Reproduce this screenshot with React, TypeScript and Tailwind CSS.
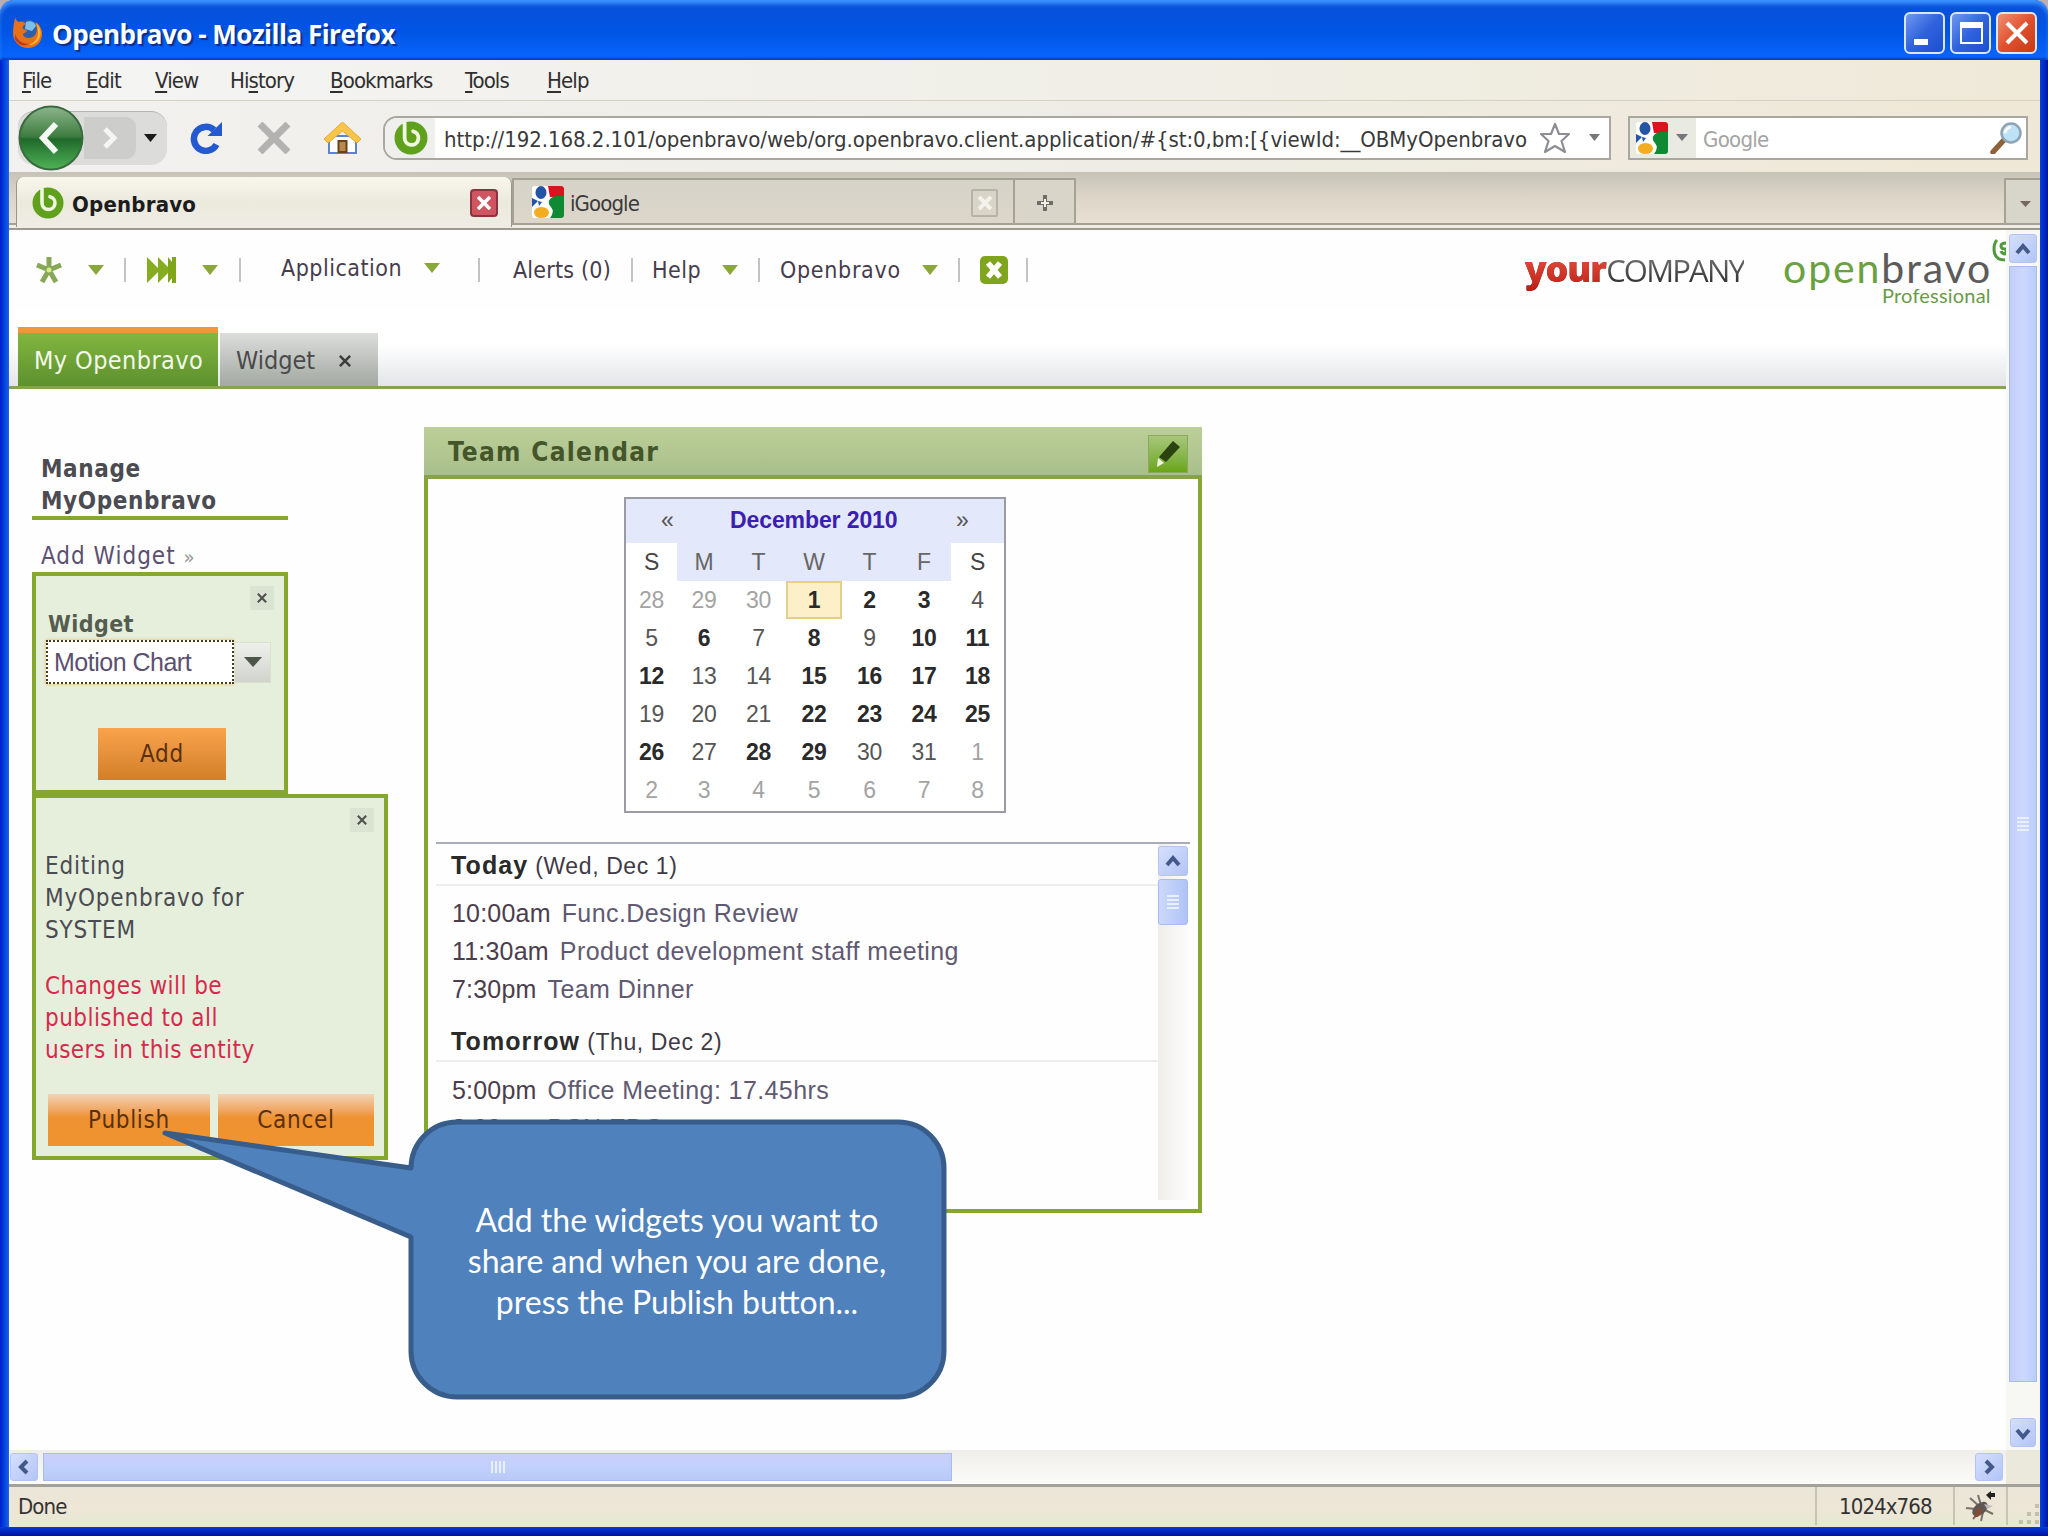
import type { ReactNode } from 'react'

const MENU = [
  { pre: '', key: 'F', post: 'ile', box: 'w-[64px]' },
  { pre: '', key: 'E', post: 'dit', box: 'w-[69px]' },
  { pre: '', key: 'V', post: 'iew', box: 'w-[75px]' },
  { pre: 'Hi', key: 's', post: 'tory', box: 'w-[100px]' },
  { pre: '', key: 'B', post: 'ookmarks', box: 'w-[135px]' },
  { pre: '', key: 'T', post: 'ools', box: 'w-[82px]' },
  { pre: '', key: 'H', post: 'elp', box: 'w-[60px]' },
]

type Tone = 'out' | 'plain' | 'busy' | 'today'

interface Day {
  n: number
  tone: Tone
}

const d = (n: number, tone: Tone = 'plain'): Day => ({ n, tone })

const WEEKS: Day[][] = [
  [d(28, 'out'), d(29, 'out'), d(30, 'out'), d(1, 'today'), d(2, 'busy'), d(3, 'busy'), d(4)],
  [d(5), d(6, 'busy'), d(7), d(8, 'busy'), d(9), d(10, 'busy'), d(11, 'busy')],
  [d(12, 'busy'), d(13), d(14), d(15, 'busy'), d(16, 'busy'), d(17, 'busy'), d(18, 'busy')],
  [d(19), d(20), d(21), d(22, 'busy'), d(23, 'busy'), d(24, 'busy'), d(25, 'busy')],
  [d(26, 'busy'), d(27), d(28, 'busy'), d(29, 'busy'), d(30), d(31), d(1, 'out')],
  [d(2, 'out'), d(3, 'out'), d(4, 'out'), d(5, 'out'), d(6, 'out'), d(7, 'out'), d(8, 'out')],
]

const TONES: Record<Tone, string> = {
  out: 'text-[#a3a3a3]',
  plain: 'text-[#555]',
  busy: 'font-bold text-[#2a2a2a]',
  today: 'border-2 border-[#e6cf86] bg-[#fdf0c8] font-bold text-[#2a2a2a]',
}

function Caret({ className }: { className: string }) {
  return (
    <svg viewBox="0 0 16 10" preserveAspectRatio="none" className={className}>
      <path d="M0 0h16L8 10z" fill="currentColor" />
    </svg>
  )
}

function FirefoxIcon() {
  return (
    <svg viewBox="0 0 32 32" className="h-8 w-8">
      <circle cx="16" cy="16" r="13" fill="#2f5fa8" />
      <path d="M14 5c4-2 9 0 10 4l-4 5-7-2z" fill="#7cc0ea" />
      <path
        d="M3 1c1 2 2 3 4 4 3-1 5 0 7 2-3 1-4 3-3 5 2 1 4 1 4 2-1 2-4 2-4 4 2 4 9 4 12 0 3-4 2-9 0-13 4 2 6 5 7 10 1 9-5 16-14 16S1 24 1 16C1 11 2 6 3 1z"
        fill="#e8701a"
      />
      <path d="M24 6c5 4 6 11 3 16-2 4-6 6-10 6 6-3 9-7 9-12 0-4-1-7-2-10z" fill="#f7b52c" />
      <path d="M3 17c2 6 7 10 14 10-5 3-11 1-14-5z" fill="#c23c10" />
    </svg>
  )
}

function ObIcon({ className }: { className: string }) {
  return (
    <svg viewBox="0 0 32 32" className={className}>
      <circle cx="16" cy="16" r="15.500" fill="#5fa01c" />
      <path d="M10 2v14a6.500 6.500 0 1 0 8-6.300" fill="none" stroke="#eef8de" strokeWidth="3.600" strokeLinecap="round" />
    </svg>
  )
}

function GoogleIcon() {
  return (
    <svg viewBox="0 0 32 32" className="h-8 w-8">
      <rect width="32" height="32" rx="3" fill="#fff" />
      <path d="M16 0h13q3 0 3 3v8H18z" fill="#d8141c" />
      <path d="M18 13q4-4 14-3v19q0 3-3 3H18q5-6 1-11-4-4-1-8z" fill="#0e8a35" />
      <ellipse cx="9" cy="6.500" rx="5.500" ry="6.500" fill="#2454a4" />
      <path d="M0 12l6 3-6 6z" fill="#2454a4" />
      <path d="M6 15l4 1-3 4z" fill="#2454a4" />
      <ellipse cx="9.500" cy="26.500" rx="7.500" ry="5.500" fill="#f4ac20" />
    </svg>
  )
}

function ReloadIcon() {
  return (
    <svg viewBox="0 0 32 32" className="h-8 w-8">
      <path d="M26.500 22.500A12 12 0 1 1 24 8" fill="none" stroke="#2459cf" strokeWidth="6.500" />
      <path d="M32 0v14H17.500z" fill="#2459cf" />
    </svg>
  )
}

function HomeIcon() {
  return (
    <svg viewBox="0 0 38 32" className="h-8 w-[38px]">
      <path d="M6 14h27v17H6z" fill="#fff" stroke="#5b83cf" strokeWidth="2" />
      <path d="M19.500 0L38 17l-4 4L19.500 9 5 21l-4-4z" fill="#f8c546" stroke="#e9a93c" strokeWidth="1" />
      <path d="M15.500 19h8v11h-8z" fill="#b58a4c" stroke="#6b4216" strokeWidth="2" />
    </svg>
  )
}

function StarIcon() {
  return (
    <svg viewBox="0 0 32 32" className="h-8 w-8">
      <path
        d="M16 2l4 10h10l-7.500 7L26 30l-10-6-10 6 3.500-11L2 12h10z"
        fill="#fff"
        stroke="#8d8d95"
        strokeWidth="2.200"
        strokeLinejoin="round"
      />
    </svg>
  )
}

function MagnifierIcon() {
  return (
    <svg viewBox="0 0 32 32" className="h-8 w-8">
      <path d="M13 19L3 30" stroke="#8d6239" strokeWidth="5.500" strokeLinecap="round" />
      <circle cx="21" cy="11" r="9.500" fill="#bfe3f6" stroke="#8fa3b4" strokeWidth="2.500" />
      <path d="M15 11q1-5 6-6" fill="none" stroke="#fff" strokeWidth="2.500" />
    </svg>
  )
}

function ScrollButton({ className, path }: { className: string; path: string }) {
  return (
    <div
      className={`flex shrink-0 items-center justify-center rounded-[3px] border border-[#b5c4ee] bg-linear-to-br from-[#d5dffd] to-[#b3c5f6] ${className}`}
    >
      <svg viewBox="0 0 16 16" className="h-4 w-4">
        <path d={path} fill="none" stroke="#44598a" strokeWidth="4" />
      </svg>
    </div>
  )
}

function TitleBar() {
  const button = 'flex h-[42px] w-[41px] items-center justify-center rounded-[6px] border-2 border-[#dbe6fb]'
  return (
    <div className="bg-[#b9aeb4]">
      <div className="flex h-[60px] items-center rounded-t-[14px] bg-linear-to-b from-[#0a50d8] via-[#0054e3] to-[#0a66ff] pt-[6px] pr-[11px] pl-[12px] shadow-[inset_0_5px_4px_-1px_#3d93ff,inset_0_-3px_2px_-1px_#0a3fc0]">
        <FirefoxIcon />
        <h1 className="mt-[2px] ml-[8px] w-[360px] font-['Open_Sans','Noto_Sans',sans-serif] text-[26px] leading-[32px] font-bold tracking-[-0.5px] whitespace-nowrap text-white [text-shadow:2px_2px_1px_#0b2f8a]">
          Openbravo - Mozilla Firefox
        </h1>
        <div className="ml-auto flex gap-[5px]">
          <div className={`${button} bg-linear-to-br from-[#6f98f0] via-[#2f62dc] to-[#1c4fd0]`}>
            <svg viewBox="0 0 30 30" className="h-[30px] w-[30px]">
              <path d="M4 21h14v6H4z" fill="#fff" />
            </svg>
          </div>
          <div className={`${button} bg-linear-to-br from-[#6f98f0] via-[#2f62dc] to-[#1c4fd0]`}>
            <svg viewBox="0 0 30 30" className="h-[30px] w-[30px]">
              <path d="M5 5h21v20H5z" fill="none" stroke="#fff" strokeWidth="2" />
              <path d="M4 4h23v6H4z" fill="#fff" />
            </svg>
          </div>
          <div className={`${button} bg-linear-to-br from-[#ee8f72] via-[#e0502c] to-[#c63a12]`}>
            <svg viewBox="0 0 30 30" className="h-[30px] w-[30px]">
              <path d="M5 5l20 20M25 5L5 25" stroke="#fff" strokeWidth="4" />
            </svg>
          </div>
        </div>
      </div>
    </div>
  )
}

function MenuBar() {
  return (
    <nav className="flex h-[41px] items-center border-b border-[#d6d2c2] bg-linear-to-r from-[#f4f4f3] via-[#f0efe8] to-[#efe9d8] pl-[13px] text-[22px] tracking-[-0.9px] text-[#2f2f2f]">
      {MENU.map((m) => (
        <span key={m.key} className={`${m.box} whitespace-nowrap`}>
          {m.pre}
          <span className="underline underline-offset-[3px]">{m.key}</span>
          {m.post}
        </span>
      ))}
    </nav>
  )
}

function NavToolbar() {
  return (
    <div className="flex h-[71px] items-center bg-linear-to-r from-[#f2f1ef] via-[#eeede6] to-[#efe8d6] pt-[2px] pr-[12px] pl-[9px]">
      <div className="flex h-[54px] w-[149px] items-center rounded-[16px] border-t border-[#b4b4b2] bg-[#dcdcdb]">
        <svg viewBox="0 0 66 66" className="h-[66px] w-[66px] shrink-0">
          <defs>
            <linearGradient id="back" x1="0" y1="0" x2="0" y2="1">
              <stop offset="0" stopColor="#8db58c" />
              <stop offset="0.480" stopColor="#3d7c40" />
              <stop offset="0.520" stopColor="#20692a" />
              <stop offset="1" stopColor="#4fb356" />
            </linearGradient>
          </defs>
          <circle cx="33" cy="33" r="31.500" fill="url(#back)" stroke="#3a6b3f" strokeWidth="2" />
          <path d="M38 19L25 33l13 14" fill="none" stroke="#f4f8f2" strokeWidth="6" />
        </svg>
        <div className="flex h-[42px] w-[52px] items-center justify-center rounded-r-[10px] bg-[#cdcdcc]">
          <svg viewBox="0 0 16 24" className="h-6 w-4">
            <path d="M3 3l9 9-9 9" fill="none" stroke="#f5f5f5" strokeWidth="5" />
          </svg>
        </div>
        <Caret className="ml-[8px] h-[8px] w-[13px] text-[#1b1b1b]" />
      </div>
      <div className="ml-[23px] flex items-center">
        <ReloadIcon />
        <svg viewBox="0 0 34 32" className="ml-[35px] h-8 w-[34px]">
          <path d="M3 2l28 28M31 2L3 30" stroke="#b3b2b0" strokeWidth="7" />
        </svg>
        <div className="ml-[32px]">
          <HomeIcon />
        </div>
      </div>
      <div className="ml-[22px] flex h-[44px] w-[1228px] shrink-0 items-center rounded-l-[14px] border-2 border-[#a9a79e] bg-white">
        <div className="flex h-full w-[50px] items-center rounded-l-[12px] bg-[#efefed] pl-[9px]">
          <ObIcon className="h-[34px] w-[34px]" />
        </div>
        <span className="mt-[3px] ml-[9px] w-[1082px] text-[22px] tracking-[-0.06px] whitespace-nowrap text-[#3a3a3a]">
          http://192.168.2.101/openbravo/web/org.openbravo.client.application/#{'{'}st:0,bm:[{'{'}viewId:__OBMyOpenbravo
        </span>
        <span className="ml-[13px]">
          <StarIcon />
        </span>
        <Caret className="ml-[18px] h-[7px] w-[11px] text-[#77777a]" />
      </div>
      <div className="ml-auto flex h-[44px] w-[400px] items-center border-2 border-[#a9a79e] bg-white pr-[4px]">
        <div className="flex h-full w-[66px] items-center bg-[#e9ebe3] pl-[6px]">
          <GoogleIcon />
          <Caret className="ml-[8px] h-[7px] w-[12px] text-[#77777a]" />
        </div>
        <span className="mt-[3px] ml-[7px] text-[22px] tracking-[-0.7px] text-[#a4a4a4]">Google</span>
        <span className="ml-auto">
          <MagnifierIcon />
        </span>
      </div>
    </div>
  )
}

function BrowserTabs() {
  return (
    <div className="h-[58px] border-b-2 border-[#9c9a8e] bg-[#efede4]">
      <div className="flex h-[53px] items-end border-b-2 border-[#a5a295] bg-linear-to-b from-[#c6c3b6] via-[#ddd6c8] to-[#e8e0d3] text-[22px]">
        <div className="-mb-[4px] ml-[7px] flex h-[50px] w-[496px] items-center rounded-t-[7px] border-x border-[#98968c] bg-linear-to-b from-[#f9f7ec] via-[#ece9dd] to-[#efede4] pt-[2px] pr-[13px] pl-[15px]">
          <ObIcon className="h-[32px] w-[32px]" />
          <span className="mt-[2px] ml-[8px] font-bold tracking-[0.2px] whitespace-nowrap text-[#1c1c1c]">Openbravo</span>
          <span className="ml-auto flex h-[28px] w-[28px] items-center justify-center rounded-[4px] border-2 border-[#8c3340] bg-[#cf5560]">
            <svg viewBox="0 0 14 14" className="h-[14px] w-[14px]">
              <path d="M1 1l12 12M13 1L1 13" stroke="#fff" strokeWidth="3.500" />
            </svg>
          </span>
        </div>
        <div className="flex h-[45px] w-[503px] items-center border-t-2 border-r-2 border-l-2 border-[#a5a295] bg-linear-to-b from-[#d6d3c8] to-[#ddd6ca] pr-[15px] pl-[18px]">
          <GoogleIcon />
          <span className="mt-[3px] ml-[6px] tracking-[-0.9px] text-[#3a3a3a]">iGoogle</span>
          <span className="mt-[3px] ml-auto flex h-[28px] w-[27px] items-center justify-center rounded-[2px] border-2 border-[#b5b2a6]">
            <svg viewBox="0 0 14 14" className="h-[14px] w-[14px]">
              <path d="M1 1l12 12M13 1L1 13" stroke="#f4f2ea" strokeWidth="4" />
            </svg>
          </span>
        </div>
        <div className="flex h-[45px] w-[61px] items-center justify-center border-t-2 border-r-2 border-[#a5a295] bg-[#dad5c9]">
          <svg viewBox="0 0 18 18" className="mt-[2px] h-[18px] w-[18px]">
            <path d="M9 1v16M1 9h16" stroke="#6e6c66" strokeWidth="4" />
            <path d="M9 5v8M5 9h8" stroke="#f1efe8" strokeWidth="2" />
          </svg>
        </div>
        <div className="ml-auto flex h-[45px] w-[36px] items-center justify-center border-t-2 border-l-2 border-[#a5a295] bg-[#d8d5ca]">
          <Caret className="mt-[4px] ml-[4px] h-[6px] w-[11px] text-[#76685d]" />
        </div>
      </div>
    </div>
  )
}

function Sep({ className }: { className: string }) {
  return <span className={`h-[24px] w-[2px] shrink-0 bg-[#c3c3c3] ${className}`} />
}

function AppToolbar() {
  const arrow = 'h-[10px] w-[16px] shrink-0 text-[#8aa83a]'
  return (
    <div className="flex h-[80px] items-center pl-[27px] text-[23px] tracking-[0.5px] text-[#453c4c]">
      <svg viewBox="0 0 26 28" className="h-[28px] w-[26px] shrink-0">
        <path d="M13 14V1M13 14L1 9M13 14l12-5M13 14L6 26M13 14l7 12" stroke="#86a857" strokeWidth="5" />
        <circle cx="13" cy="14" r="2.500" fill="#d7ec8e" />
      </svg>
      <Caret className={`ml-[26px] ${arrow}`} />
      <Sep className="ml-[20px]" />
      <svg viewBox="0 0 30 26" className="ml-[21px] h-[26px] w-[30px] shrink-0">
        <path d="M0 0l13 13L0 26zM11 0l13 13-13 13z" fill="#86ad22" />
        <path d="M21 0l4 5V0h4v26h-4v-5l-4 5z" fill="#7fa51b" />
      </svg>
      <Caret className={`ml-[25px] ${arrow}`} />
      <Sep className="ml-[21px]" />
      <span className="-mt-[4px] ml-[40px] w-[143px] whitespace-nowrap">Application</span>
      <Caret className={`-mt-[4px] ${arrow}`} />
      <Sep className="ml-[38px]" />
      <span className="ml-[33px] w-[118px] tracking-[0.2px] whitespace-nowrap">Alerts (0)</span>
      <Sep className="" />
      <span className="ml-[19px] w-[70px] whitespace-nowrap">Help</span>
      <Caret className={arrow} />
      <Sep className="ml-[20px]" />
      <span className="ml-[20px] w-[142px] tracking-[0.7px] whitespace-nowrap">Openbravo</span>
      <Caret className={arrow} />
      <Sep className="ml-[20px]" />
      <svg viewBox="0 0 28 28" className="ml-[20px] h-[28px] w-[28px] shrink-0">
        <rect width="28" height="28" rx="5" fill="#7fa51f" />
        <path d="M8 7l12 14M20 7L8 21" stroke="#fff" strokeWidth="5.500" />
      </svg>
      <Sep className="ml-[18px]" />
      <div className="ml-auto flex items-start pt-[8px]">
        <p className="bg-linear-to-b from-[#999] to-[#222] bg-clip-text pt-[6px] font-['Open_Sans','Noto_Sans',sans-serif] text-[31px] leading-[40px] tracking-[-1.8px] whitespace-nowrap text-transparent">
          <b className="bg-linear-to-b from-[#f05a48] to-[#bc150e] bg-clip-text text-[36px] font-extrabold tracking-[-1.1px]">
            your
          </b>
          COMPANY
        </p>
        <div className="ml-[39px] w-[209px] pt-[3px] font-['Lato',sans-serif]">
          <p className="text-[41px] leading-[44px] tracking-[1.9px] whitespace-nowrap text-[#5b5b5b]">
            <span className="text-[#6aa040]">open</span>bravo
          </p>
          <p className="-mt-[5px] ml-[99px] text-[20px] leading-[20px] tracking-[0.2px] whitespace-nowrap text-[#6a9a4a]">
            Professional
          </p>
        </div>
        <svg viewBox="0 0 14 24" className="-mt-[5px] h-[24px] w-[14px]">
          <path d="M13 22C4 22 2 17 2 11q0-6 3-9" fill="none" stroke="#4f9a3a" strokeWidth="3" />
          <path d="M14 5q-5 0-5 3t5 3v5q-4 0-5-3" fill="none" stroke="#4f9a3a" strokeWidth="3" />
        </svg>
      </div>
    </div>
  )
}

function ViewTabs() {
  return (
    <div className="flex h-[79px] items-end border-b-[3px] border-[#86a34f] bg-linear-to-b from-white from-45% to-[#e3e5e8] pl-[9px] text-[25px]">
      <div className="h-[59px] w-[200px] border-t-[6px] border-[#f0973a] bg-linear-to-b from-[#82b640] to-[#5d912d] pt-[8px] pl-[16px] leading-[40px] tracking-[0.4px] whitespace-nowrap text-[#f3f9ea]">
        My Openbravo
      </div>
      <div className="ml-[2px] flex h-[53px] w-[158px] items-center bg-linear-to-b from-[#dcdedb] to-[#a3a8a2] pt-[3px] pl-[16px] text-[#4a4a4a]">
        <span className="w-[103px]">Widget</span>
        <svg viewBox="0 0 14 14" className="h-[12px] w-[12px]">
          <path d="M1 1l12 12M13 1L1 13" stroke="#3d3d3d" strokeWidth="3" />
        </svg>
      </div>
    </div>
  )
}

function CloseBox() {
  return (
    <span className="flex h-[24px] w-[24px] items-center justify-center bg-[#dbe4d3]">
      <svg viewBox="0 0 12 12" className="h-[10px] w-[10px]">
        <path d="M1 1l10 10M11 1L1 11" stroke="#505050" strokeWidth="2.500" />
      </svg>
    </span>
  )
}

function OrangeButton({ children, className }: { children: ReactNode; className: string }) {
  return (
    <button
      type="button"
      className={`flex h-[52px] items-center justify-center text-[24px] tracking-[0.7px] text-[#5a3010] ${className}`}
    >
      {children}
    </button>
  )
}

function ManagePanel() {
  return (
    <aside className="flex w-[379px] shrink-0 flex-col pt-[64px] pl-[23px] text-[24px] leading-[32px] tracking-[0.8px] text-[#4b4b52]">
      <h2 className="h-[67px] w-[256px] border-b-[4px] border-[#86a72e] pl-[9px] font-semibold tracking-[0.6px]">
        Manage
        <br />
        MyOpenbravo
      </h2>
      <p className="mt-[20px] h-[32px] pl-[9px] tracking-[1px] whitespace-nowrap text-[#5a5070]">
        Add Widget <span className="text-[20px] text-[#999]">»</span>
      </p>

      <section className="flex h-[222px] w-[256px] flex-col border-[4px] border-[#86a72e] bg-[#e6efdc] pr-[10px] pl-[10px]">
        <div className="mt-[10px] flex justify-end">
          <CloseBox />
        </div>
        <h3 className="-mt-[2px] pl-[2px] text-[23px] font-bold tracking-[0.4px] text-[#555d50]">Widget</h3>
        <div className="flex h-[44px] items-center">
          <div className="flex h-[44px] w-[188px] items-center border-2 border-dotted border-[#4a3a1a] bg-white pl-[6px] font-['Liberation_Sans',Arial,sans-serif] text-[25px] tracking-[-0.5px] whitespace-nowrap text-[#5a5070] shadow-[0_0_3px_#f0b060]">
            Motion Chart
          </div>
          <div className="flex h-[41px] w-[37px] items-center justify-center border border-[#d9e3cb] bg-linear-to-b from-[#eef0ec] to-[#d0d4cd]">
            <Caret className="h-[10px] w-[18px] text-[#4d5548]" />
          </div>
        </div>
        <OrangeButton className="mt-[44px] ml-[52px] w-[128px] bg-linear-to-b from-[#f9a34c] to-[#d27f28]">Add</OrangeButton>
      </section>

      <section className="flex h-[366px] w-[356px] flex-col border-[4px] border-[#86a72e] bg-[#e6efdc] pr-[10px] pl-[9px]">
        <div className="mt-[10px] flex justify-end">
          <CloseBox />
        </div>
        <p className="mt-[18px] w-[230px] whitespace-nowrap">
          Editing
          <br />
          MyOpenbravo for
          <br />
          SYSTEM
        </p>
        <p className="mt-[24px] w-[230px] tracking-[0.45px] whitespace-nowrap text-[#d62a4c]">
          Changes will be
          <br />
          published to all
          <br />
          users in this entity
        </p>
        <div className="mt-[28px] flex gap-[8px] pl-[3px]">
          <OrangeButton className="w-[162px] bg-linear-to-b from-[#f2d3b4] via-[#ee9232] via-45% to-[#f09430]">Publish</OrangeButton>
          <OrangeButton className="w-[156px] bg-linear-to-b from-[#f2d3b4] via-[#ee9232] via-45% to-[#f09430]">Cancel</OrangeButton>
        </div>
      </section>
    </aside>
  )
}

function MonthGrid() {
  return (
    <div className="mt-[17px] ml-[188px] h-[316px] w-[382px] border-2 border-[#9b9ba6] bg-white text-[23px] tracking-[-0.2px]">
      <div className="flex h-[44px] items-center bg-[#e4e8fb] pb-px text-[#555]">
        <span className="ml-[35px] w-[69px]">«</span>
        <span className="w-[226px] font-bold tracking-[-0.1px] whitespace-nowrap text-[#3a20b0]">December 2010</span>
        <span>»</span>
      </div>
      <div className="grid grid-cols-[51px_54px_55px_56px_55px_54px_53px] text-center leading-[38px]">
        {['S', 'M', 'T', 'W', 'T', 'F', 'S'].map((w, i) => (
          <span key={i} className={i === 0 || i === 6 ? 'text-[#444]' : 'bg-[#e4e8fb] text-[#666]'}>
            {w}
          </span>
        ))}
        {WEEKS.flat().map((day, i) => (
          <span key={i} className={`flex h-[38px] items-center justify-center ${TONES[day.tone]}`}>
            {day.n}
          </span>
        ))}
      </div>
    </div>
  )
}

function Event({ time, title }: { time: string; title: string }) {
  return (
    <li className="flex gap-[11px] whitespace-nowrap">
      <span className="tracking-[0.2px] text-[#4a3d4c]">{time}</span>
      <span className="tracking-[0.4px] text-[#5f5a72]">{title}</span>
    </li>
  )
}

function TeamCalendar() {
  return (
    <section className="mt-[38px] ml-[36px] h-[786px] w-[778px] font-['Liberation_Sans',Arial,sans-serif]">
      <header className="flex h-[52px] items-center border-b-[4px] border-[#86a34a] bg-linear-to-b from-[#bccf98] to-[#a9bf8b] pr-[14px] pl-[24px]">
        <h2 className="mt-[2px] font-['DejaVu_Sans_Condensed','DejaVu_Sans',sans-serif] text-[26px] font-semibold tracking-[1.3px] whitespace-nowrap text-[#44552a]">
          Team Calendar
        </h2>
        <span className="mt-[5px] ml-auto flex h-[38px] w-[40px] items-center justify-center border border-[#8aa860] bg-linear-to-b from-[#a9c67a] to-[#6aa60c]">
          <svg viewBox="0 0 28 28" className="h-[28px] w-[28px]">
            <path d="M19 1l7 6-14 15-7-5z" fill="#2a4310" />
            <path d="M4 18l6 5-7 4z" fill="#f0f5e0" />
          </svg>
        </span>
      </header>
      <div className="h-[734px] border-x-[4px] border-b-[4px] border-[#86a72e] px-[8px]">
        <div className="h-[363px] pt-px">
          <MonthGrid />
        </div>
        <div className="flex h-[362px] border-t-2 border-[#a9adb8]">
          <div className="h-[355px] w-[725px] overflow-hidden text-[25px] text-[#3f3a45]">
            <h3 className="h-[42px] border-b-2 border-[#ededed] pl-[15px] leading-[42px] whitespace-nowrap">
              <b className="tracking-[1.1px] text-[#2a2a2a]">Today</b>{' '}
              <span className="text-[23px] tracking-[0.6px]">(Wed, Dec 1)</span>
            </h3>
            <ul className="mt-[8px] pl-[16px] leading-[38px]">
              <Event time="10:00am" title="Func.Design Review" />
              <Event time="11:30am" title="Product development staff meeting" />
              <Event time="7:30pm" title="Team Dinner" />
            </ul>
            <h3 className="mt-[12px] h-[42px] border-b-2 border-[#ededed] pl-[15px] leading-[42px] whitespace-nowrap">
              <b className="tracking-[1.1px] text-[#2a2a2a]">Tomorrow</b>{' '}
              <span className="text-[23px] tracking-[0.6px]">(Thu, Dec 2)</span>
            </h3>
            <ul className="mt-[9px] pl-[16px] leading-[38px]">
              <Event time="5:00pm" title="Office Meeting: 17.45hrs" />
              <Event time="8:00pm" title="BCN EDC" />
            </ul>
          </div>
          <div className="h-[356px] w-[32px] bg-linear-to-r from-[#efeeea] to-[#fdfdfc] pt-[2px]">
            <ScrollButton className="h-[30px] w-[30px]" path="M2 12l6-7 6 7" />
            <div className="mt-[3px] flex h-[46px] w-[30px] flex-col items-center justify-center gap-[2px] rounded-[3px] border border-[#a9bbee] bg-linear-to-r from-[#ccd9fb] to-[#b0c3f5]">
              <i className="h-[2px] w-[12px] bg-[#e8effe]" />
              <i className="h-[2px] w-[12px] bg-[#e8effe]" />
              <i className="h-[2px] w-[12px] bg-[#e8effe]" />
              <i className="h-[2px] w-[12px] bg-[#e8effe]" />
            </div>
          </div>
        </div>
      </div>
    </section>
  )
}

function Callout() {
  return (
    <div className="absolute top-[1117px] left-[160px] h-[286px] w-[790px]">
      <svg viewBox="0 0 790 286" className="absolute inset-0 h-full w-full">
        <path
          d="M297 5H738a46 46 0 0 1 46 46V234a46 46 0 0 1-46 46H297a46 46 0 0 1-46-46V120L5 16 251 51A46 46 0 0 1 297 5z"
          fill="#4f81bd"
          stroke="#385d8a"
          strokeWidth="5"
          strokeLinejoin="round"
        />
      </svg>
      <p className="relative ml-[249px] w-[536px] pt-[82px] text-center font-['Lato','Open_Sans',sans-serif] text-[32px] leading-[41px] whitespace-nowrap text-white">
        Add the widgets you want to
        <br />
        share and when you are done,
        <br />
        press the Publish button...
      </p>
    </div>
  )
}

function StatusBar() {
  return (
    <footer className="flex h-[43px] items-center border-t-[3px] border-[#a3a29a] bg-linear-to-b from-[#e9e6d8] via-[#eee6d6] to-[#e6e8d4] pb-[2px] text-[22px] tracking-[-0.9px] text-[#333]">
      <span className="ml-[9px]">Done</span>
      <span className="ml-auto flex h-full w-[138px] items-center border-l-2 border-[#c9c5b4] pl-[22px]">1024x768</span>
      <span className="flex h-full w-[53px] items-center border-l-2 border-[#c9c5b4] pl-[10px]">
        <svg viewBox="0 0 32 32" className="h-8 w-8">
          <path d="M1 18l10 1M5 8l9 8M13 5l3 10M8 29l6-7M16 31l2-9M28 24l-8-4" stroke="#77726c" strokeWidth="2" />
          <ellipse cx="15" cy="19" rx="9" ry="5.500" transform="rotate(-40 15 19)" fill="#5f5851" />
          <path d="M9 27l4-9 5 2-5 7z" fill="#8a4a35" />
          <path d="M19 14l9 2-6 3z" fill="#b9b9b9" />
          <path d="M21 5l5-4v2h4v4h-4v3z" fill="#222" />
        </svg>
      </span>
      <span className="flex h-full w-[34px] items-end justify-end border-l-2 border-[#c9c5b4]">
        <svg viewBox="0 0 24 24" className="h-6 w-6">
          <path d="M19 3h4v4h-4zM19 11h4v4h-4zM11 11h4v4h-4zM19 19h4v4h-4zM11 19h4v4h-4zM3 19h4v4H3z" fill="#c4bfae" />
        </svg>
      </span>
    </footer>
  )
}

export default function App() {
  return (
    <div className="relative flex h-[1536px] w-[2048px] flex-col overflow-hidden bg-[#0a22c4] font-['DejaVu_Sans_Condensed','DejaVu_Sans',sans-serif]">
      <TitleBar />
      <div className="flex h-[1467px]">
        <div className="w-[9px] shrink-0 bg-linear-to-r from-[#001ccc] to-[#1c62ee]" />
        <div className="flex w-[2031px] flex-col bg-white">
          <MenuBar />
          <NavToolbar />
          <BrowserTabs />
          <div className="flex h-[1220px]">
            <main className="flex w-[1997px] shrink-0 flex-col overflow-hidden bg-[#fefefe]">
              <AppToolbar />
              <ViewTabs />
              <div className="flex">
                <ManagePanel />
                <TeamCalendar />
              </div>
            </main>
            <div className="flex w-[34px] flex-col items-center bg-[#f7f7f3] pt-[4px] pb-[3px]">
              <ScrollButton className="h-[29px] w-[28px]" path="M2 12l6-7 6 7" />
              <div className="mt-[3px] flex h-[1116px] w-[28px] flex-col items-center justify-center gap-[2px] border border-[#a9bbee] bg-linear-to-r from-[#c3cdfa] via-[#cdd8fe] to-[#b9cdfb]">
                <i className="h-[2px] w-[12px] bg-[#e8effe]" />
                <i className="h-[2px] w-[12px] bg-[#e8effe]" />
                <i className="h-[2px] w-[12px] bg-[#e8effe]" />
                <i className="h-[2px] w-[12px] bg-[#e8effe]" />
              </div>
              <ScrollButton className="mt-auto h-[29px] w-[26px]" path="M2 5l6 7 6-7" />
            </div>
          </div>
          <div className="flex h-[34px] items-center bg-linear-to-b from-[#efeeea] to-[#fbfbf9]">
            <ScrollButton className="ml-[1px] h-[28px] w-[28px]" path="M11 2L5 8l6 6" />
            <div className="ml-[5px] flex h-[28px] w-[909px] items-center justify-center gap-[2px] border border-[#a9bbee] bg-linear-to-b from-[#c9cff8] via-[#c1d1fd] to-[#b9c9f6]">
              <i className="h-[12px] w-[2px] bg-[#e8effe]" />
              <i className="h-[12px] w-[2px] bg-[#e8effe]" />
              <i className="h-[12px] w-[2px] bg-[#e8effe]" />
              <i className="h-[12px] w-[2px] bg-[#e8effe]" />
            </div>
            <ScrollButton className="ml-auto h-[28px] w-[28px]" path="M5 2l6 6-6 6" />
            <div className="ml-[3px] h-full w-[34px] bg-[#ebe9dc]" />
          </div>
          <StatusBar />
        </div>
        <div className="w-[8px] shrink-0 bg-linear-to-r from-[#0a3fe0] to-[#0014a8]" />
      </div>
      <div className="h-[9px] bg-linear-to-b from-[#0a3ad8] to-[#0010a0]" />
      <Callout />
    </div>
  )
}
